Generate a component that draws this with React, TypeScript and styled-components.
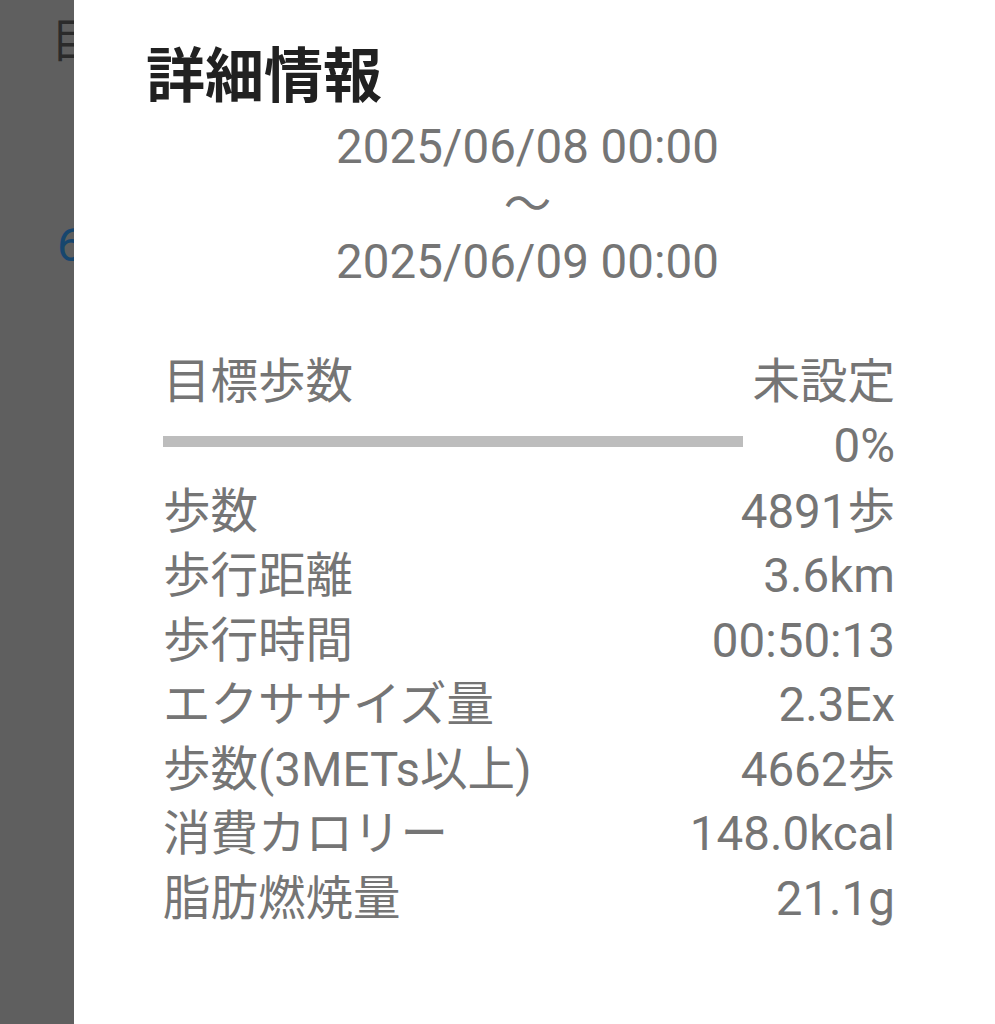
import * as React from "react"
import styled, {createGlobalStyle} from "styled-components";


const FONT = `Roboto, "Noto Sans CJK JP", sans-serif`

const period = {
  from: '2025/06/08 00:00',
  to: '2025/06/09 00:00',
}

const stats = [
  {label: '歩数', value: '4891歩'},
  {label: '歩行距離', value: '3.6km'},
  {label: '歩行時間', value: '00:50:13'},
  {label: 'エクササイズ量', value: '2.3Ex'},
  {label: '歩数(3METs以上)', value: '4662歩'},
  {label: '消費カロリー', value: '148.0kcal'},
  {label: '脂肪燃焼量', value: '21.1g'},
]


const App = () => {

  const goal = {label: '目標歩数', value: '未設定', percent: 0}

  return (
    <>
      <GlobalStyle />
      <Screen>
        <Backdrop>
          <BackdropTitle>目</BackdropTitle>
          <BackdropValue>6</BackdropValue>
        </Backdrop>
        <Dialog>
          <Title>詳細情報</Title>
          <Period>
            <div>{period.from}</div>
            <div>〜</div>
            <div>{period.to}</div>
          </Period>
          <StatList>
            <Row>
              <span>{goal.label}</span>
              <span>{goal.value}</span>
            </Row>
            <ProgressRow>
              <Bar>
                <BarFill style={{width: `${goal.percent}%`}} />
              </Bar>
              <span>{goal.percent}%</span>
            </ProgressRow>
            {stats.map(s => (
              <Row key={s.label}>
                <span>{s.label}</span>
                <span>{s.value}</span>
              </Row>
            ))}
          </StatList>
        </Dialog>
      </Screen>
    </>
  )
}


const GlobalStyle = createGlobalStyle`
  body {
    margin: 0;
    background: #fff;
    font-family: ${FONT};
  }
`
const Screen = styled.div`
  display: flex;
  height: 1024px;
  overflow: hidden;
`
const Backdrop = styled.div`
  width: 74px;
  flex-shrink: 0;
  background: #5f5f5f;
  overflow: hidden;
  padding-left: 51px;
  box-sizing: border-box;
  white-space: nowrap;
`
const BackdropTitle = styled.div`
  font: normal normal 400 47px/64px ${FONT};
  color: #2b2b2b;
  margin-top: 9px;
`
const BackdropValue = styled.div`
  font: normal normal 400 47px/64px ${FONT};
  color: #17466e;
  margin-top: 140px;
  padding-left: 6px;
`
const Dialog = styled.div`
  flex: 1;
  background: #fff;
  padding: 42px 86px 0 72px;
`
const Title = styled.h1`
  margin: 0;
  font: normal normal 700 59px/70px ${FONT};
  color: #212121;
`
const Period = styled.div`
  margin-top: 7px;
  text-align: center;
  font: normal normal 400 47.5px/57.5px ${FONT};
  color: #757575;
`
const StatList = styled.div`
  margin-top: 58px;
  padding: 0 14px 0 17px;
`
const Row = styled.div`
  display: flex;
  justify-content: space-between;
  font: normal normal 400 47.5px/64.5px ${FONT};
  color: #757575;
  white-space: nowrap;
`
const ProgressRow = styled(Row)`
  line-height: 65.5px;
`
const Bar = styled.div`
  width: 580px;
  height: 11px;
  margin-top: 22px;
  background: #bdbdbd;
`
const BarFill = styled.div`
  height: 100%;
  background: #4caf50;
`

export default App
